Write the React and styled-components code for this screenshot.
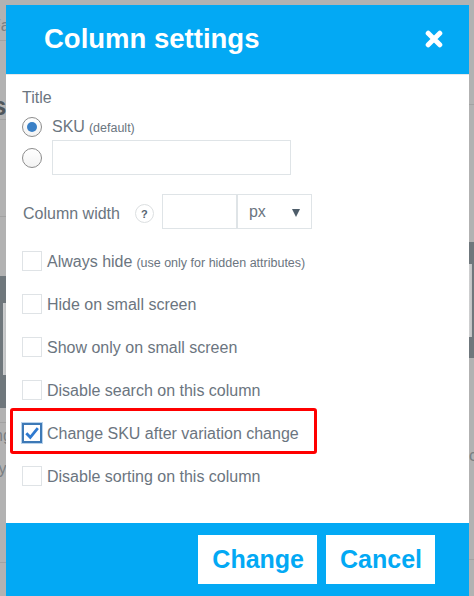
import React from "react";
import styled, { createGlobalStyle } from "styled-components";

const GlobalStyle = createGlobalStyle`
  html, body {
    margin: 0;
    padding: 0;
    width: 474px;
    height: 596px;
    overflow: hidden;
    background: #b2b2b2;
    font-family: "Liberation Sans", Arial, sans-serif;
  }
  #root {
    position: relative;
    width: 474px;
    height: 596px;
  }
  * { box-sizing: border-box; }
`;

const BLUE = "#03a9f4";
const TEXT = "#6b7580";

/* ---------- backdrop page (visible only at the edges) ---------- */
const Stage = styled.div`
  position: relative;
  width: 474px;
  height: 596px;
  display: flex;
  justify-content: space-between;
  background: #b2b2b2;
`;

const Edge = styled.div`
  width: ${(p) => p.$w}px;
  height: 100%;
  overflow: hidden;
  display: flex;
  flex-direction: column;
`;

const EdgeCell = styled.div`
  flex: 0 0 ${(p) => p.$h}px;
  border-bottom: ${(p) => (p.$line ? "1px solid #a2a2a2" : "none")};
  background: ${(p) => (p.$dark ? "#6f777c" : "transparent")};
  padding-top: ${(p) => p.$pt || 0}px;
  font-size: ${(p) => p.$fs || 16}px;
  font-weight: ${(p) => (p.$bold ? 700 : 400)};
  color: ${(p) => (p.$bold ? "#4f565b" : "#7a7f83")};
  text-indent: ${(p) => p.$indent || 0}px;
  white-space: nowrap;
  line-height: 1;
`;

const EdgeStrip = styled.div`
  height: ${(p) => p.$h}px;
  width: 3px;
  margin-left: ${(p) => p.$ml}px;
  background: linear-gradient(90deg, #cfd0d1, #bfc1c2);
`;

/* ---------- modal ---------- */
const Modal = styled.div`
  position: absolute;
  top: 5px;
  left: 6px;
  width: 463px;
  display: flex;
  flex-direction: column;
  background: #fff;
`;

const Header = styled.div`
  height: 70px;
  background: ${BLUE};
  border-bottom: 1px solid #e6e8ea;
  display: flex;
  align-items: center;
  justify-content: space-between;
  padding: 0 26px 2px 38px;
`;

const HeaderTitle = styled.h2`
  margin: 0;
  font-size: 27.5px;
  font-weight: 700;
  color: #fff;
  letter-spacing: 0;
`;

const CloseButton = styled.button`
  width: 18px;
  height: 18px;
  padding: 0;
  border: none;
  background: transparent;
  display: flex;
  cursor: pointer;
`;

const Body = styled.div`
  padding: 12px 16px 37px 16px;
  display: flex;
  flex-direction: column;
  color: ${TEXT};
  font-size: 16px;
`;

const FieldLabel = styled.div`
  line-height: 20px;
  padding-top: 1px;
  margin-bottom: 9px;
`;

const RadioRow = styled.label`
  display: flex;
  align-items: center;
  gap: 10px;
  height: ${(p) => p.$h}px;
  margin-top: ${(p) => p.$mt || 0}px;
`;

const Radio = styled.span`
  width: 20px;
  height: 20px;
  border-radius: 50%;
  border: 1px solid #8c8c8c;
  background: linear-gradient(#ffffff, #f3f3f3);
  display: flex;
  align-items: center;
  justify-content: center;
  flex: 0 0 auto;
  &::after {
    content: "";
    width: 10px;
    height: 10px;
    border-radius: 50%;
    background: ${(p) => (p.$checked ? "#3a80c6" : "transparent")};
  }
`;

const Hint = styled.span`
  font-size: 12.5px;
  margin-left: 4px;
`;

const TextInput = styled.input`
  width: 239px;
  height: 35px;
  border: 1px solid #dfe4e7;
  outline: none;
  padding: 0 8px;
  font: inherit;
`;

const WidthRow = styled.div`
  display: flex;
  align-items: center;
  height: 36px;
  margin-top: 18px;
`;

const WidthLabel = styled.span`
  margin-right: 15px;
  margin-left: 1px;
  padding-top: 6px;
`;

const HelpIcon = styled.span`
  width: 19px;
  height: 19px;
  border-radius: 50%;
  border: 1px solid #dcdfe1;
  display: flex;
  align-items: center;
  justify-content: center;
  font-size: 11px;
  font-weight: 700;
  color: #566470;
  margin-right: 8px;
  margin-top: 5px;
`;

const NumberInput = styled.input`
  width: 75px;
  height: 35px;
  border: 1px solid #dfe4e7;
  outline: none;
  font: inherit;
`;

const Select = styled.div`
  width: 75px;
  height: 35px;
  margin-top: 1px;
  border: 1px solid #dfe4e7;
  display: flex;
  align-items: center;
  justify-content: space-between;
  padding: 0 11px 0 11px;
  font-size: 16px;
  color: ${TEXT};
`;

const Caret = styled.span`
  width: 0;
  height: 0;
  border-left: 4.5px solid transparent;
  border-right: 4.5px solid transparent;
  border-top: 8px solid #4e5d6a;
  margin-top: 2px;
`;

const CheckList = styled.div`
  display: flex;
  flex-direction: column;
  gap: 23px;
  margin-top: 22px;
`;

const CheckRow = styled.label`
  position: relative;
  display: flex;
  align-items: center;
  height: 20px;
  white-space: nowrap;
`;

const CheckText = styled.span`
  padding-top: 1px;
`;

const CheckBox = styled.span`
  width: 20px;
  height: 20px;
  flex: 0 0 auto;
  margin-right: 5px;
  border: ${(p) => (p.$checked ? "2px solid #3d79b6" : "1px solid #dfe3e6")};
  box-shadow: ${(p) => (p.$checked ? "0 0 0 1px #b9d3ec" : "none")};
  background: #fff;
  display: flex;
  align-items: center;
  justify-content: center;
`;

const Highlight = styled.span`
  position: absolute;
  left: -12px;
  top: -15px;
  width: 307px;
  height: 46px;
  border: 3px solid #ff0000;
  border-radius: 3px;
  pointer-events: none;
`;

const Footer = styled.div`
  background: ${BLUE};
  display: flex;
  justify-content: flex-end;
  gap: 9px;
  padding: 12px 34px 30px 0;
`;

const FooterButton = styled.button`
  height: 49px;
  padding: 0 13px 0 14px;
  border: none;
  border-radius: 0;
  background: #fff;
  color: ${BLUE};
  font-family: "Liberation Sans", Arial, sans-serif;
  font-size: 25px;
  font-weight: 700;
  cursor: pointer;
`;

const options = [
  { label: "Always hide", hint: "(use only for hidden attributes)" },
  { label: "Hide on small screen" },
  { label: "Show only on small screen" },
  { label: "Disable search on this column" },
  { label: "Change SKU after variation change", checked: true, highlight: true },
  { label: "Disable sorting on this column" },
];

function CheckMark() {
  return (
    <svg width="16" height="16" viewBox="0 0 16 16">
      <path
        d="M2.3 8.2 L6.3 12.3 L13.8 3.2"
        fill="none"
        stroke="#2f7ad0"
        strokeWidth="2.8"
        strokeLinejoin="miter"
      />
    </svg>
  );
}

export default function App() {
  return (
    <>
      <GlobalStyle />
      <Stage>
        <Edge $w={6}>
          <EdgeCell $h={41} $line $pt={18} $indent={-9}>Fa</EdgeCell>
          <EdgeCell $h={79} $line $pt={52} $fs={26} $bold $indent={-8}>s</EdgeCell>
          <EdgeCell $h={97} $line />
          <EdgeCell $h={59} />
          <EdgeCell $h={132} $dark $pt={27}>
            <EdgeStrip $h={72} $ml={3} />
          </EdgeCell>
          <EdgeCell $h={15} $line />
          <EdgeCell $h={30} $pt={5} $indent={-6}>ng</EdgeCell>
          <EdgeCell $h={110} $line $pt={8} $indent={-6}>typ</EdgeCell>
        </Edge>
        <Edge $w={5}>
          <EdgeCell $h={105} $line />
          <EdgeCell $h={137} />
          <EdgeCell $h={116} $dark $pt={22}>
            <EdgeStrip $h={73} $ml={0} />
          </EdgeCell>
          <EdgeCell $h={202} $line $pt={90}>c</EdgeCell>
        </Edge>

        <Modal>
          <Header>
            <HeaderTitle>Column settings</HeaderTitle>
            <CloseButton aria-label="Close">
              <svg width="18" height="18" viewBox="0 0 18 18">
                <path
                  d="M3.2 3.2 L14.8 14.8 M14.8 3.2 L3.2 14.8"
                  stroke="#fff"
                  strokeWidth="5"
                  strokeLinecap="round"
                />
              </svg>
            </CloseButton>
          </Header>

          <Body>
            <FieldLabel>Title</FieldLabel>
            <RadioRow $h={20}>
              <Radio $checked />
              <span>
                SKU<Hint>(default)</Hint>
              </span>
            </RadioRow>
            <RadioRow $h={35} $mt={3}>
              <Radio />
              <TextInput type="text" />
            </RadioRow>

            <WidthRow>
              <WidthLabel>Column width</WidthLabel>
              <HelpIcon>?</HelpIcon>
              <NumberInput type="text" />
              <Select>
                <span>px</span>
                <Caret />
              </Select>
            </WidthRow>

            <CheckList>
              {options.map((o) => (
                <CheckRow key={o.label}>
                  <CheckBox $checked={o.checked}>{o.checked && <CheckMark />}</CheckBox>
                  <CheckText>
                    {o.label}
                    {o.hint && <Hint>{o.hint}</Hint>}
                  </CheckText>
                  {o.highlight && <Highlight />}
                </CheckRow>
              ))}
            </CheckList>
          </Body>

          <Footer>
            <FooterButton>Change</FooterButton>
            <FooterButton>Cancel</FooterButton>
          </Footer>
        </Modal>
      </Stage>
    </>
  );
}
